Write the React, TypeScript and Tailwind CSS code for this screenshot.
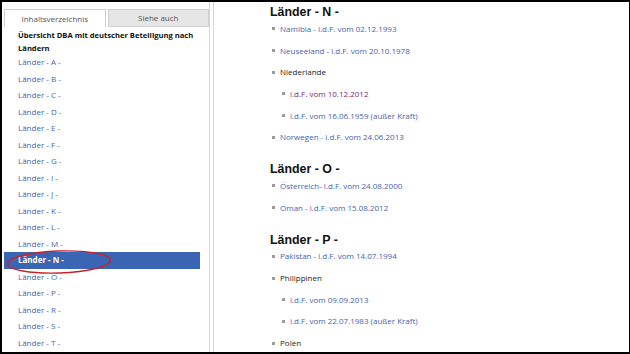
import React from "react";

const letters = ["A", "B", "C", "D", "E", "F", "G", "I", "J", "K", "L", "M", "N", "O", "P", "R", "S", "T"];

type Item = { text: string; link?: boolean; visited?: boolean; sub?: boolean };

const sections: { title: string; items: Item[] }[] = [
  {
    title: "Länder - N -",
    items: [
      { text: "Namibia - i.d.F. vom 02.12.1993", link: true },
      { text: "Neuseeland - i.d.F. vom 20.10.1978", link: true },
      { text: "Niederlande" },
      { text: "i.d.F. vom 10.12.2012", link: true, visited: true, sub: true },
      { text: "i.d.F. vom 16.06.1959 (außer Kraft)", link: true, sub: true },
      { text: "Norwegen - i.d.F. vom 24.06.2013", link: true },
    ],
  },
  {
    title: "Länder - O -",
    items: [
      { text: "Österreich- i.d.F. vom 24.08.2000", link: true },
      { text: "Oman - i.d.F. vom 15.08.2012", link: true },
    ],
  },
  {
    title: "Länder - P -",
    items: [
      { text: "Pakistan - i.d.F. vom 14.07.1994", link: true },
      { text: "Philippinen" },
      { text: "i.d.F. vom 09.09.2013", link: true, sub: true },
      { text: "i.d.F. vom 22.07.1983 (außer Kraft)", link: true, sub: true },
      { text: "Polen" },
    ],
  },
];

function Sidebar() {
  return (
    <div className="relative w-[208px] h-full pl-[2px] pt-[7px] border-r border-[#d6d6d6] overflow-hidden">
      <div className="flex h-[18px] text-[8px] text-[#555]">
        <div className="w-[102px] flex items-center justify-center border border-b-0 border-[#cfcfcf] bg-white">
          Inhaltsverzeichnis
        </div>
        <div className="w-[102px] ml-[2px] flex items-center justify-center border border-[#cfcfcf] bg-[#e6e6e6]">
          Siehe auch
        </div>
      </div>
      <div className="pt-[2px] pl-[14px] pr-2 text-[7.6px] leading-[12.5px] font-bold text-[#111]">
        Übersicht DBA mit deutscher Beteiligung nach Ländern
      </div>
      <ul>
        {letters.map((l) =>
          l === "N" ? (
            <li key={l} className="h-[16.5px] w-[196px] flex items-center pl-[14px] bg-[#3a64b4] text-white font-bold text-[8px]">
              Länder - {l} -
            </li>
          ) : (
            <li key={l} className="h-[16.5px] flex items-center pl-[14px] text-[#4563b0] text-[8px]">
              Länder - {l} -
            </li>
          )
        )}
      </ul>
      <svg className="absolute left-[3px] top-[246px]" width="110" height="30" viewBox="0 0 110 30">
        <ellipse cx="54" cy="14" rx="51.5" ry="11" fill="none" stroke="#c8232c" strokeWidth="1.4" transform="rotate(-2 54 14)" />
      </svg>
    </div>
  );
}

function Content() {
  return (
    <div className="flex-1 pl-[56px] pt-[2px] text-[8px]">
      {sections.map((s, i) => (
        <div key={s.title} className={i > 0 ? "mt-[13px]" : ""}>
          <h2 className="h-[16px] leading-[16px] text-[12.4px] font-bold text-[#111] font-['Liberation_Sans',Arial,sans-serif]">
            {s.title}
          </h2>
          <ul className="-mt-[2px]">
            {s.items.map((it) => (
              <li key={it.text} className={`h-[21.7px] flex items-center ${it.sub ? "pl-[12px]" : "pl-[2px]"}`}>
                <span className="w-[3px] h-[3px] mr-[5px] bg-[#9a9a9a]" />
                <span className={it.visited ? "text-[#7a2a74]" : it.link ? "text-[#4563b0]" : "text-[#222]"}>
                  {it.text}
                </span>
              </li>
            ))}
          </ul>
        </div>
      ))}
    </div>
  );
}

export default function App() {
  return (
    <div className="w-[630px] h-[354px] bg-black pt-[2px] pl-[2px] pr-[1px] pb-[2px] font-['Open_Sans',sans-serif]">
      <div className="w-full h-full bg-white flex overflow-hidden">
        <Sidebar />
        <div className="w-[4px] h-full border-r border-[#d6d6d6]" />
        <Content />
      </div>
    </div>
  );
}
